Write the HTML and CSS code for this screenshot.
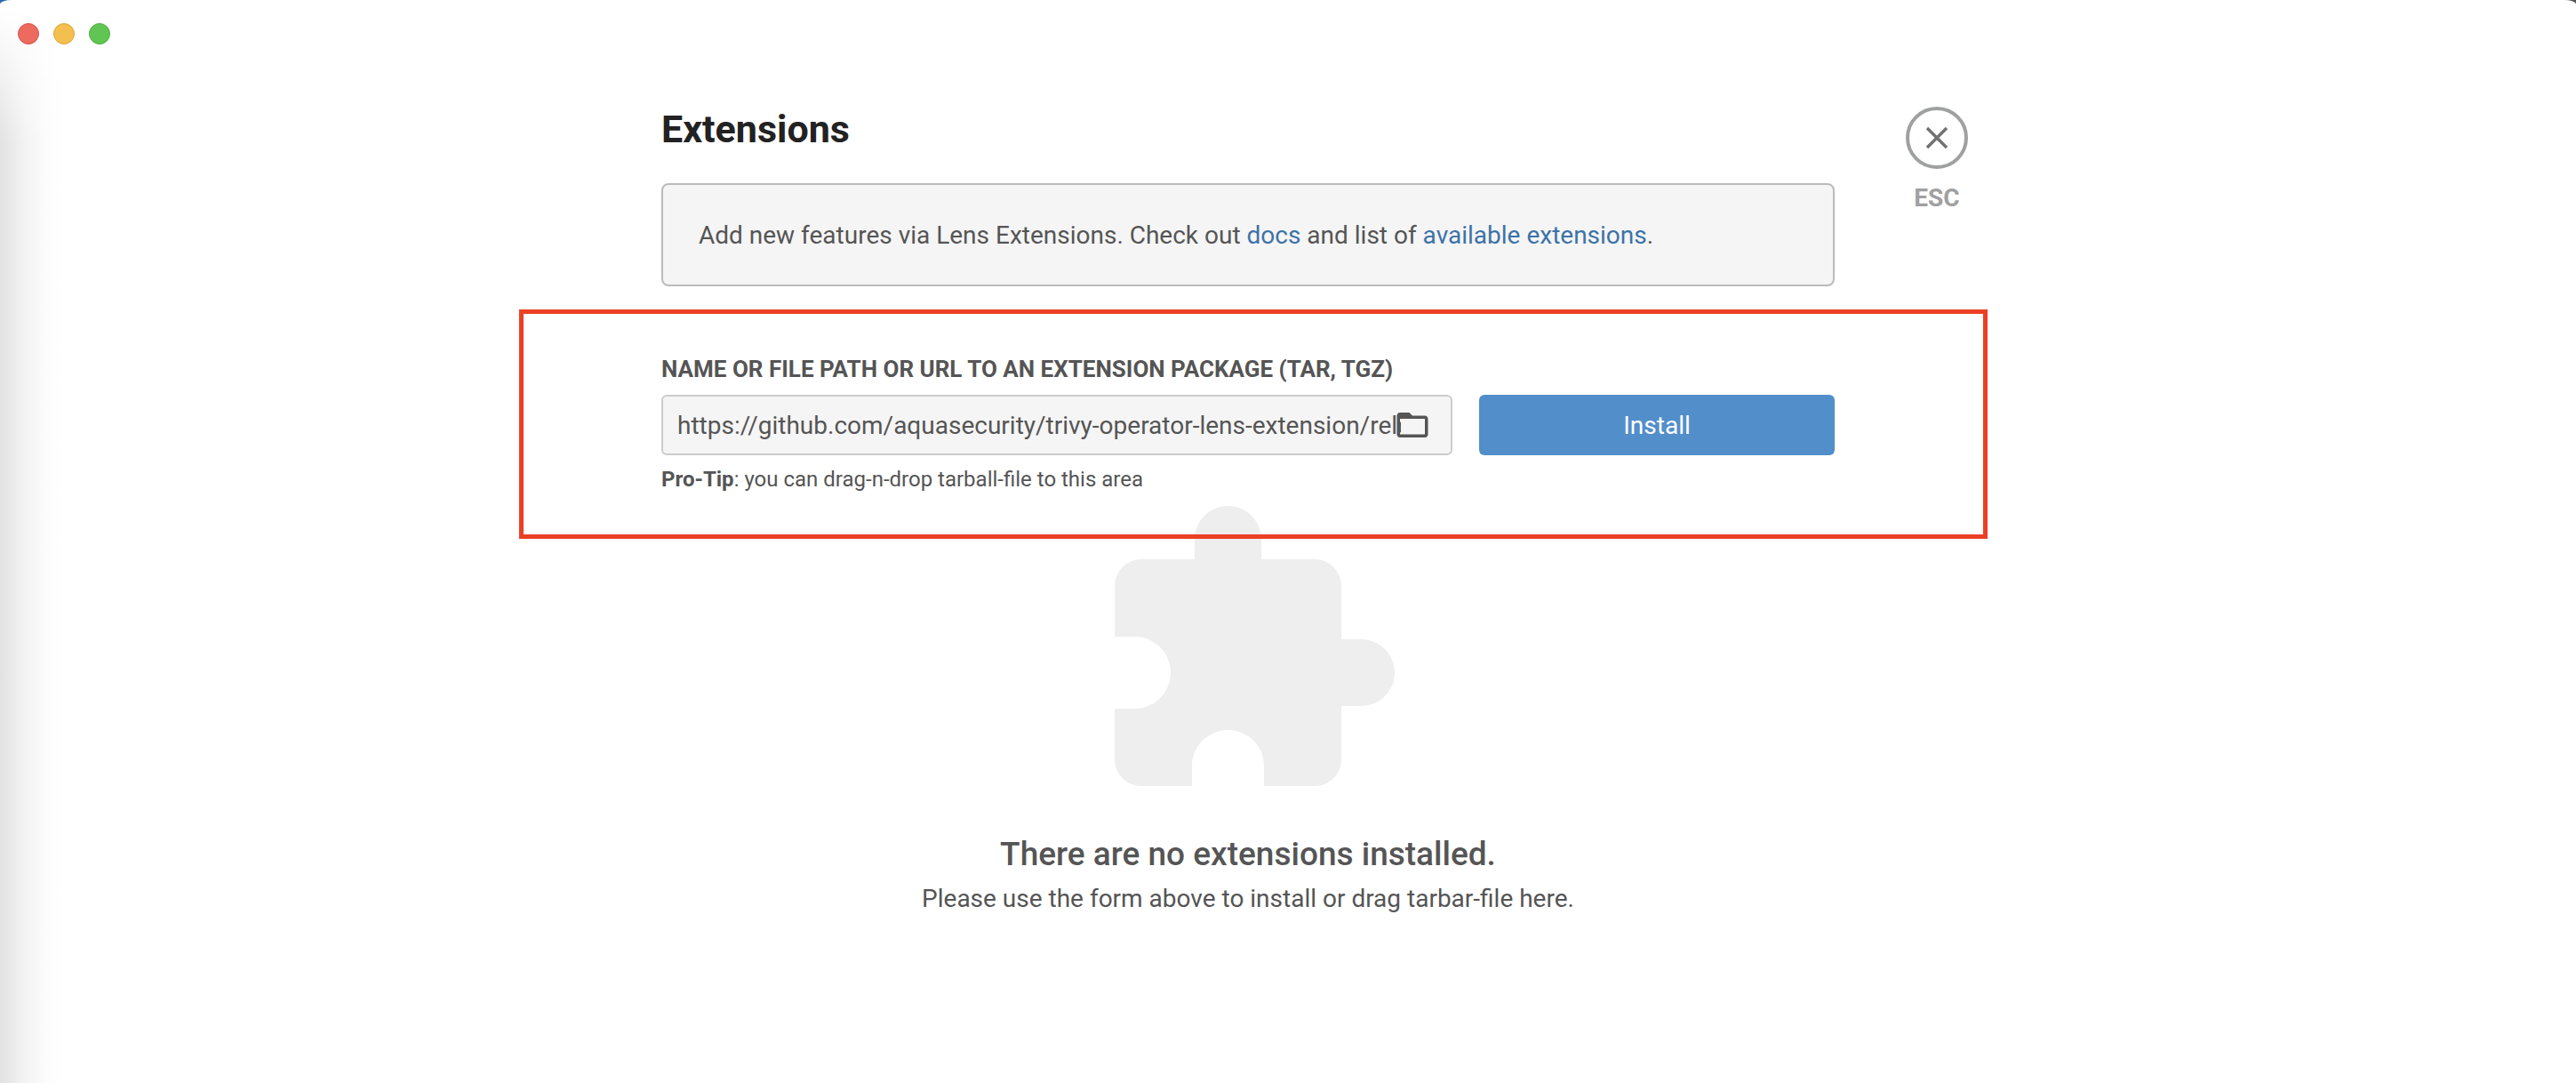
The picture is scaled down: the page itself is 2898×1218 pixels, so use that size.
FILE: index.html
```html
<!DOCTYPE html>
<html lang="en">
<head>
<meta charset="utf-8">
<title>Extensions</title>
<link rel="stylesheet" href="styles.css">
</head>
<body>
<div class="window">
  <header class="titlebar">
    <button class="light light-close" aria-label="Close window"></button>
    <button class="light light-minimize" aria-label="Minimize window"></button>
    <button class="light light-zoom" aria-label="Zoom window"></button>
  </header>
  <div class="layout">
    <main class="content">
      <h1 class="title">Extensions</h1>
      <p class="notice">Add new features via Lens Extensions. Check out <a href="#docs">docs</a> and list of <a href="#available">available extensions</a>.</p>
      <form class="install">
        <label class="install-label" for="package">Name or file path or URL to an extension package (tar, tgz)</label>
        <div class="install-row">
          <div class="field">
            <input class="field-input" id="package" type="text" value="https://github.com/aquasecurity/trivy-operator-lens-extension/releases">
            <button class="field-browse" type="button" aria-label="Browse">
              <svg viewBox="0 0 24 24" width="42" height="42"><path fill="currentColor" d="M20 6h-8l-2-2H4c-1.1 0-1.99.9-1.99 2L2 18c0 1.1.9 2 2 2h16c1.1 0 2-.9 2-2V8c0-1.1-.9-2-2-2zm0 12H4V8h16v10z"/></svg>
            </button>
          </div>
          <button class="install-button" type="button">Install</button>
        </div>
        <p class="hint"><b>Pro-Tip</b>: you can drag-n-drop tarball-file to this area</p>
        <div class="highlight"></div>
      </form>
      <section class="empty">
        <svg class="empty-icon" viewBox="0 0 24 24" width="360" height="360"><path fill="currentColor" d="M20.5 11H19V7c0-1.1-.9-2-2-2h-4V3.5C13 2.12 11.88 1 10.5 1S8 2.12 8 3.5V5H4c-1.1 0-1.99.9-1.99 2v3.8H3.5c1.49 0 2.7 1.21 2.7 2.7s-1.21 2.7-2.7 2.7H2V20c0 1.1.9 2 2 2h3.8v-1.5c0-1.49 1.21-2.7 2.7-2.7s2.7 1.21 2.7 2.7V22H17c1.1 0 2-.9 2-2v-4h1.5c1.38 0 2.5-1.12 2.5-2.5S21.88 11 20.5 11z"/></svg>
        <h2 class="empty-title">There are no extensions installed.</h2>
        <p class="empty-text">Please use the form above to install or drag tarbar-file here.</p>
      </section>
    </main>
    <aside class="escape">
      <button class="escape-button" type="button" aria-label="Close">
        <svg viewBox="0 0 24 24" width="42" height="42"><path fill="currentColor" d="M19 6.41L17.59 5 12 10.59 6.41 5 5 6.41 10.59 12 5 17.59 6.41 19 12 13.41 17.59 19 19 17.59 13.41 12z"/></svg>
      </button>
      <span class="escape-label">ESC</span>
    </aside>
  </div>
</div>
</body>
</html>
```
FILE: styles.css
```css
* {
  box-sizing: border-box;
}

body {
  margin: 0;
  background: linear-gradient(to right, #2a6bb0 50%, #555 50%);
  color: #555;
  font: 28px/36px Roboto, sans-serif;
}

h1, h2, p {
  margin: 0;
}

button {
  padding: 0;
  border: 0;
  background: none;
  color: inherit;
  font: inherit;
}

a {
  color: #3d72a8;
  text-decoration: none;
}

svg {
  display: block;
}

.window {
  position: relative;
  min-height: 100vh;
  border-radius: 13px 13px 0 0 / 5px 5px 0 0;
  background: #fff;
  overflow: hidden;
}

/* soft shade along the left edge of the window */
.window::before {
  content: "";
  position: absolute;
  inset: 10px auto 0 0;
  width: 70px;
  background: linear-gradient(to right, #e2e2e2, #f3f3f3 40%, #fcfcfc 75%, #fff);
  mask-image: linear-gradient(to bottom, transparent, rgb(0 0 0 / 25%) 40px, #000 150px);
}

.titlebar {
  position: relative;
  display: flex;
  gap: 16px;
  height: 76px;
  padding: 26px 20px;
}

.light {
  width: 24px;
  height: 24px;
  border: 1px solid;
  border-radius: 50%;
}

.light-close {
  border-color: #dc5148;
  background: #ec6a5e;
}

.light-minimize {
  border-color: #dba63c;
  background: #f5bf4f;
}

.light-zoom {
  border-color: #4fb03f;
  background: #61c554;
}

.layout {
  display: flex;
  justify-content: center;
  gap: 80px;
  padding: 44px 0 44px 60px;
}

.content {
  flex: 0 1 1320px;
}

.title {
  color: #222;
  font-size: 43px;
  font-weight: 700;
  line-height: 50px;
}

.notice {
  margin-top: 36px;
  padding: 39px 40px 37px;
  border: 2px solid #bbb;
  border-radius: 8px;
  background: #f5f5f5;
}

.install {
  position: relative;
  padding-top: 75px;
}

.install-label {
  display: block;
  font-size: 26px;
  font-weight: 700;
  line-height: 36px;
  text-transform: uppercase;
}

.install-row {
  display: flex;
  gap: 30px;
  margin-top: 11px;
}

.field {
  display: flex;
  align-items: center;
  flex: 1;
  height: 68px;
  padding: 0 22px 0 16px;
  border: 2px solid #ccc;
  border-radius: 6px;
  background: #f5f5f5;
}

.field-input {
  flex: 1;
  min-width: 0;
  height: 100%;
  padding: 0;
  border: 0;
  outline: 0;
  background: none;
  color: inherit;
  font: inherit;
}

/* the icon overlaps the end of a long value */
.field-browse {
  margin-left: -8px;
}

.install-button {
  width: 400px;
  padding-top: 2px;
  border-radius: 6px;
  background: #528ec9;
  color: #fff;
}

.hint {
  margin-top: 12px;
  font-size: 24px;
  line-height: 30px;
}

/* frame that points out the install form */
.highlight {
  position: absolute;
  inset: 26px -172px -52px -160px;
  border: 5px solid #eb4025;
  pointer-events: none;
}

.empty {
  display: flex;
  flex-direction: column;
  align-items: center;
}

.empty-icon {
  color: #eee;
}

.empty-title {
  margin-top: 25px;
  font-size: 37px;
  font-weight: 500;
  line-height: 44px;
}

.empty-text {
  margin-top: 10px;
}

.escape {
  display: flex;
  flex-direction: column;
  align-items: center;
  gap: 15px;
  width: 70px;
}

.escape-button {
  display: grid;
  place-items: center;
  width: 70px;
  height: 70px;
  border: 4px solid #9fa0a0;
  border-radius: 50%;
  color: #727272;
}

.escape-label {
  color: #a0a0a0;
  font-weight: 700;
}
```
